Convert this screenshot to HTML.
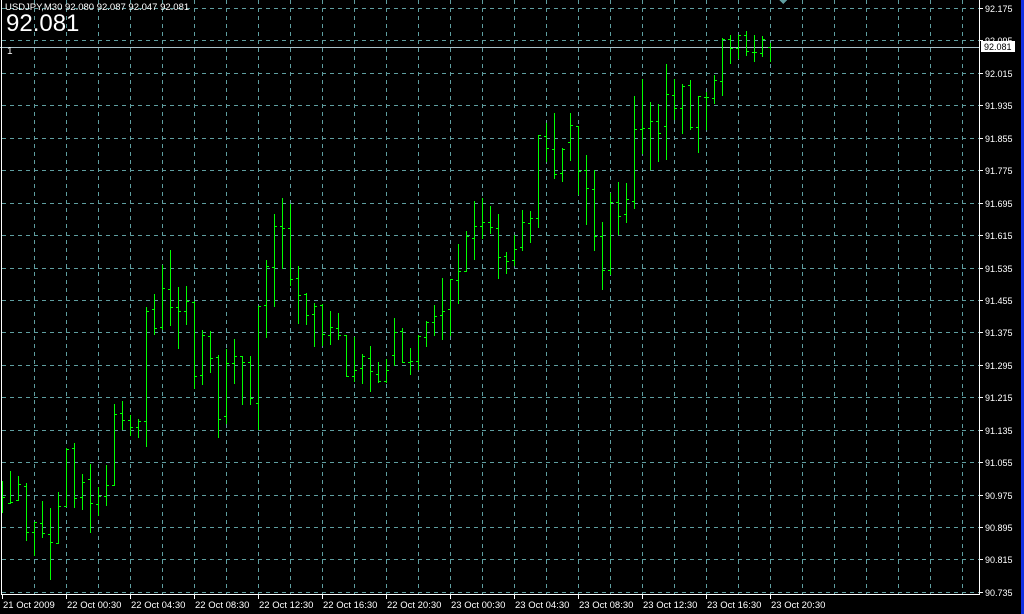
<!DOCTYPE html>
<html><head><meta charset="utf-8"><style>
html,body{margin:0;padding:0;background:#000;width:1024px;height:614px;overflow:hidden}
svg{position:absolute;left:0;top:0}
text{font-family:"Liberation Sans",sans-serif;}
</style></head><body>
<svg id="s" width="1024" height="614" viewBox="0 0 1024 614" xmlns="http://www.w3.org/2000/svg" shape-rendering="crispEdges">
<rect x="0" y="0" width="1024" height="614" fill="#000"/>
<rect x="1021" y="0" width="3" height="614" fill="#1030e0"/>
<g id="grid" stroke="#5f9ea0" stroke-width="1" stroke-dasharray="4,4"></g>
<line x1="0" y1="47.5" x2="979" y2="47.5" stroke="#a8c0c8" stroke-width="1"/>
<g id="bars" stroke="#00ff00" stroke-width="1" fill="none"></g>
<line x1="1.5" y1="0" x2="1.5" y2="595" stroke="#fff"/>
<line x1="979.5" y1="0" x2="979.5" y2="595" stroke="#fff"/>
<line x1="1" y1="594.5" x2="980" y2="594.5" stroke="#fff"/>
<g id="axis" fill="#fff" font-size="9"></g>
<polygon points="779,0 787,0 783,4" fill="#5f9ea0"/>
<text x="5" y="10" fill="#fff" font-size="9.5">USDJPY,M30  92.080 92.087 92.047 92.081</text>
<text x="6" y="31" fill="#fff" font-size="24">92.081</text>
<text x="7" y="54" fill="#fff" font-size="10">1</text>
<rect x="981" y="41" width="34" height="11" fill="#fff"/>
<text x="984" y="50" fill="#000" font-size="9">92.081</text>
</svg>
<script>
var ns="http://www.w3.org/2000/svg";
function el(p,t,a,txt){var e=document.createElementNS(ns,t);for(var k in a)e.setAttribute(k,a[k]);if(txt)e.textContent=txt;p.appendChild(e);return e;}
var g=document.getElementById('grid'),ax=document.getElementById('axis'),b=document.getElementById('bars');
var d='';
for(var i=0;i<19;i++){var y=Math.round(8+32.44*i)+0.5;d+='M2 '+y+'H979';
 el(ax,'text',{x:985,y:y+3.5},(92.175-0.08*i).toFixed(3));
 el(ax,'rect',{x:980,y:y-0.5,width:3,height:1});}
for(var x=34;x<979;x+=32){d+='M'+(x+0.5)+' 0V595';}
el(g,'path',{d:d});
var labels=['21 Oct 2009','22 Oct 00:30','22 Oct 04:30','22 Oct 08:30','22 Oct 12:30','22 Oct 16:30','22 Oct 20:30','23 Oct 00:30','23 Oct 04:30','23 Oct 08:30','23 Oct 12:30','23 Oct 16:30','23 Oct 20:30'];
for(var i=0;i<labels.length;i++){var x=2+64*i;el(ax,'rect',{x:x,y:595,width:1,height:4});el(ax,'text',{x:x+1,y:608,'font-size':9.5},labels[i]);}
var D=[[481,512,497,497],[471,503,503,502],[476,500,500,484],[483,540,486,532],[522,555,532,522],[501,537,523,533],[508,579,534,542],[492,543,543,506],[448,506,506,449],[443,507,448,498],[474,509,497,482],[464,532,479,503],[487,515,504,496],[465,505,496,485],[404,485,485,414],[401,429,413,420],[415,435,420,427],[419,437,427,421],[307,446,421,311],[294,334,309,328],[265,329,327,288],[250,325,289,307],[287,348,307,311],[286,324,311,301],[301,388,302,376],
[330,384,375,335],[331,372,336,358],[355,437,357,419],[349,423,416,363],[339,383,363,356],[356,404,356,362],[356,404,362,398],[306,429,403,306],[260,337,305,266],[214,306,267,226],[198,268,226,228],[204,285,228,279],[266,323,278,295],[293,324,294,315],[303,346,314,306],[304,345,305,334],[311,344,335,327],[313,339,328,335],[335,376,335,376],[337,381,376,370],[354,383,368,356],[346,391,358,371],[362,382,374,381],[359,382,381,370],
[318,365,355,332],[328,362,331,362],[348,374,362,361],[335,369,361,336],[321,346,337,322],[305,335,322,316],[278,339,315,311],[279,335,309,279],[244,303,280,271],[231,271,271,236],[201,259,238,226],[198,238,226,222],[206,233,222,227],[214,278,228,257],[252,273,256,261],[235,265,260,249],[210,250,247,222],[211,242,223,218],[135,227,218,135],[123,161,136,148],[113,178,149,174],[148,181,173,149],[113,160,142,125],[126,194,126,171],[155,224,170,188],
[170,250,189,236],[222,289,236,270],[193,274,270,202],[182,234,202,216],[183,222,214,199],[96,208,201,129],[79,153,129,128],[102,169,128,121],[104,161,121,133],[64,159,126,94],[79,119,95,108],[84,133,108,86],[80,129,85,127],[96,152,127,96],[92,129,97,97],[75,103,98,80],[38,95,81,39],[35,63,39,48],[35,58,48,35],[31,55,35,51],[35,61,52,52],[36,56,53,39],[43,61,47,47]];
var p='';
for(var k=0;k<D.length;k++){var x=2+8*k,a=D[k],X=x+0.5;
 p+='M'+X+' '+a[0]+'V'+(a[1]+1);
 if(x>3)p+='M'+(x-2)+' '+(a[2]+0.5)+'H'+(x+0.5);
 if(k<D.length-1)p+='M'+(x+1)+' '+(a[3]+0.5)+'H'+(x+3);}
el(b,'path',{d:p});
</script>
</body></html>
